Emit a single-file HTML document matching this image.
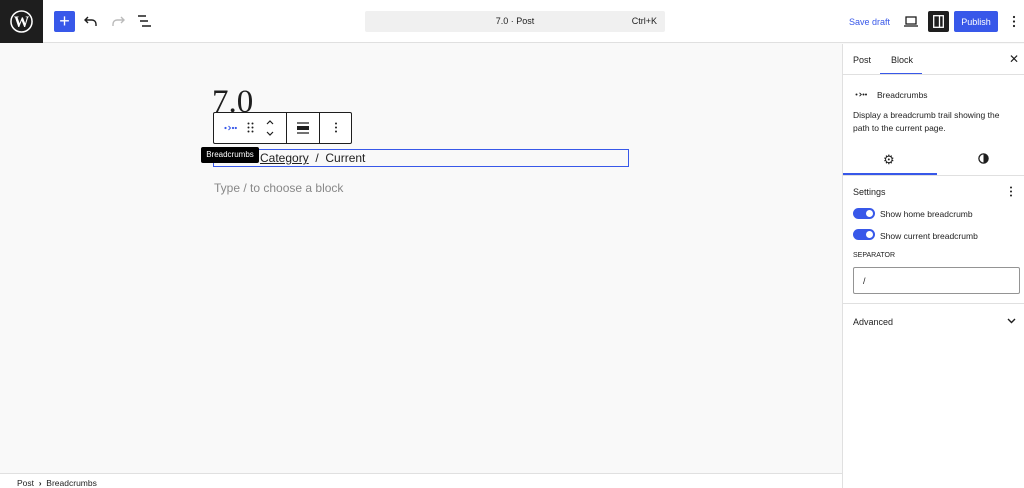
<!DOCTYPE html><html><head><style>
*{box-sizing:border-box;margin:0;padding:0}
body{width:1024px;height:488px;overflow:hidden;font-family:"Liberation Sans",sans-serif;background:#f9f9f9;position:relative;color:#1e1e1e}
.a{position:absolute}
</style></head><body>
<div class="a" style="left:0;top:0;width:1024px;height:43px;background:#fff;border-bottom:1px solid #e0e0e0"></div>
<div class="a" style="left:0;top:0;width:43px;height:43px;background:#1e1e1e"></div>
<svg class="a" style="left:10px;top:10px" width="23" height="23" viewBox="0 0 24 24"><circle cx="12" cy="12" r="11" fill="none" stroke="#fff" stroke-width="1.6"/><text x="12" y="17.5" font-family="Liberation Serif" font-size="16" font-weight="bold" fill="#fff" text-anchor="middle">W</text></svg>
<div class="a" style="left:54px;top:11px;width:21px;height:21px;background:#3858e9;border-radius:2px;color:#fff;font-size:18px;line-height:20px;text-align:center">+</div>
<svg class="a" style="left:84px;top:14px" width="14" height="14" viewBox="0 0 14 14"><path d="M4 3L1 6l3 3M1 6h7a4 4 0 014 4v2" fill="none" stroke="#1e1e1e" stroke-width="1.4"/></svg>
<svg class="a" style="left:111px;top:14px" width="14" height="14" viewBox="0 0 14 14"><path d="M10 3l3 3-3 3M13 6H6a4 4 0 00-4 4v2" fill="none" stroke="#bbb" stroke-width="1.4"/></svg>
<svg class="a" style="left:137px;top:15px" width="15" height="12" viewBox="0 0 15 12"><path d="M1 1h8M3 6h8M5 11h9" stroke="#1e1e1e" stroke-width="1.4"/></svg>
<div class="a" style="left:365px;top:11px;width:300px;height:21px;background:#f0f0f0;border-radius:2px;font-size:9px;line-height:21px;text-align:center">7.0 · Post<span class="a" style="right:8px;top:0">Ctrl+K</span></div>
<div class="a" style="left:849px;top:17px;font-size:9px;color:#3858e9">Save draft</div>
<svg class="a" style="left:904px;top:16px" width="14" height="11"><rect x="2" y="1" width="10" height="7" fill="none" stroke="#1e1e1e" stroke-width="1.3"/><path d="M0 10h14" stroke="#1e1e1e" stroke-width="1.3"/></svg>
<div class="a" style="left:928px;top:11px;width:21px;height:21px;background:#1e1e1e;border-radius:2px"></div>
<svg class="a" style="left:933px;top:15px" width="11" height="13"><rect x=".7" y=".7" width="9.6" height="11.6" fill="none" stroke="#fff" stroke-width="1.3"/><path d="M6.5 1v11" stroke="#fff" stroke-width="1.3"/></svg>
<div class="a" style="left:954px;top:11px;width:44px;height:21px;background:#3858e9;border-radius:2px;color:#fff;font-size:9px;line-height:22px;text-align:center">Publish</div>
<svg class="a" style="left:1012px;top:15px" width="4" height="13"><g fill="#1e1e1e"><circle cx="2" cy="2" r="1.1"/><circle cx="2" cy="6.5" r="1.1"/><circle cx="2" cy="11" r="1.1"/></g></svg>
<!-- sidebar -->
<div class="a" style="left:842px;top:44px;width:182px;height:444px;background:#fff;border-left:1px solid #e0e0e0"></div>
<div class="a" style="left:853px;top:55px;font-size:9px">Post</div>
<div class="a" style="left:891px;top:55px;font-size:9px">Block</div>
<div class="a" style="left:880px;top:73px;width:42px;height:1.5px;background:#3858e9"></div>
<div class="a" style="left:1009px;top:52px;font-size:12px">✕</div>
<div class="a" style="left:843px;top:74px;width:181px;height:1px;background:#e0e0e0"></div>
<svg class="a" style="left:855px;top:92px" width="12" height="5"><g fill="#1e1e1e"><circle cx="1.5" cy="2.5" r="1"/><path d="M4.5 0.8l1.8 1.7-1.8 1.7" fill="none" stroke="#1e1e1e" stroke-width=".9"/><circle cx="8.5" cy="2.5" r="1"/><circle cx="11" cy="2.5" r="1"/></g></svg>
<div class="a" style="left:877px;top:90px;font-size:8.5px">Breadcrumbs</div>
<div class="a" style="left:853px;top:109px;font-size:8.5px;line-height:12.5px;width:165px">Display a breadcrumb trail showing the path to the current page.</div>
<div class="a" style="left:883px;top:152px;font-size:13px">⚙</div>
<svg class="a" style="left:978px;top:153px" width="11" height="11"><circle cx="5.5" cy="5.5" r="4.6" fill="none" stroke="#1e1e1e" stroke-width="1.3"/><path d="M5.5 1a4.5 4.5 0 010 9z" fill="#1e1e1e"/></svg>
<div class="a" style="left:843px;top:173px;width:94px;height:1.5px;background:#3858e9"></div>
<div class="a" style="left:843px;top:175px;width:181px;height:1px;background:#e0e0e0"></div>
<div class="a" style="left:853px;top:187px;font-size:9px">Settings</div>
<svg class="a" style="left:1009px;top:186px" width="4" height="11"><g fill="#1e1e1e"><circle cx="2" cy="1.5" r="1"/><circle cx="2" cy="5.5" r="1"/><circle cx="2" cy="9.5" r="1"/></g></svg>
<div class="a" style="left:853px;top:208px;width:22px;height:11px;background:#3858e9;border-radius:6px"><div class="a" style="right:2px;top:2px;width:7px;height:7px;background:#fff;border-radius:50%"></div></div>
<div class="a" style="left:880px;top:209px;font-size:8.5px">Show home breadcrumb</div>
<div class="a" style="left:853px;top:229px;width:22px;height:11px;background:#3858e9;border-radius:6px"><div class="a" style="right:2px;top:2px;width:7px;height:7px;background:#fff;border-radius:50%"></div></div>
<div class="a" style="left:880px;top:231px;font-size:8.5px">Show current breadcrumb</div>
<div class="a" style="left:853px;top:252px;font-size:7px">SEPARATOR</div>
<div class="a" style="left:853px;top:267px;width:167px;height:27px;border:1px solid #949494;border-radius:2px;font-size:9px;padding:8px 0 0 9px">/</div>
<div class="a" style="left:843px;top:303px;width:181px;height:1px;background:#e0e0e0"></div>
<div class="a" style="left:853px;top:317px;font-size:9px">Advanced</div>
<svg class="a" style="left:1007px;top:318px" width="9" height="6"><path d="M1 1l3.5 3.5L8 1" fill="none" stroke="#1e1e1e" stroke-width="1.4"/></svg>
<!-- footer -->
<div class="a" style="left:0;top:473px;width:842px;height:15px;background:#fff;border-top:1px solid #e0e0e0"></div>
<div class="a" style="left:17px;top:478px;font-size:8.5px">Post &nbsp;<b>›</b>&nbsp; Breadcrumbs</div>
<!-- canvas -->
<div class="a" style="left:212px;top:84px;font-family:'Liberation Serif',serif;font-size:33px">7.0</div>
<div class="a" style="left:213px;top:149px;width:416px;height:18px;border:1.5px solid #3858e9;background:#f9f9f9;font-size:12px;padding:1px 0 0 46px"><u>Category</u>&nbsp; / &nbsp;Current</div>
<div class="a" style="left:213px;top:112px;width:139px;height:32px;background:#fff;border:1px solid #1e1e1e;border-radius:2px"></div>
<div class="a" style="left:286px;top:112px;width:1px;height:32px;background:#1e1e1e"></div>
<div class="a" style="left:319px;top:112px;width:1px;height:32px;background:#1e1e1e"></div>
<svg class="a" style="left:224px;top:125px" width="13" height="6"><g fill="#3858e9"><circle cx="1.5" cy="3" r="1.1"/><path d="M4.5 1l2 2-2 2" fill="none" stroke="#3858e9" stroke-width="1"/><circle cx="9" cy="3" r="1.1"/><circle cx="11.8" cy="3" r="1.1"/></g></svg>
<svg class="a" style="left:247px;top:122px" width="7" height="11"><g fill="#1e1e1e"><circle cx="1.5" cy="1.5" r="1"/><circle cx="5.5" cy="1.5" r="1"/><circle cx="1.5" cy="5.5" r="1"/><circle cx="5.5" cy="5.5" r="1"/><circle cx="1.5" cy="9.5" r="1"/><circle cx="5.5" cy="9.5" r="1"/></g></svg>
<svg class="a" style="left:265px;top:119px" width="10" height="18"><path d="M2 5l3-3 3 3M2 13l3 3 3-3" fill="none" stroke="#1e1e1e" stroke-width="1.2"/></svg>
<svg class="a" style="left:297px;top:122px" width="12" height="12"><path d="M0 1h12M0 11h12" stroke="#1e1e1e" stroke-width="1.2"/><rect x="0" y="4" width="12" height="4" fill="#1e1e1e"/></svg>
<svg class="a" style="left:334px;top:122px" width="4" height="11"><g fill="#1e1e1e"><circle cx="2" cy="1.5" r="1"/><circle cx="2" cy="5.5" r="1"/><circle cx="2" cy="9.5" r="1"/></g></svg>
<div class="a" style="left:201px;top:147px;width:58px;height:16px;background:#000;color:#fff;font-size:8px;line-height:16px;text-align:center;border-radius:2px">Breadcrumbs</div>
<div class="a" style="left:214px;top:181px;font-size:12px;color:#888">Type / to choose a block</div>
</body></html>
